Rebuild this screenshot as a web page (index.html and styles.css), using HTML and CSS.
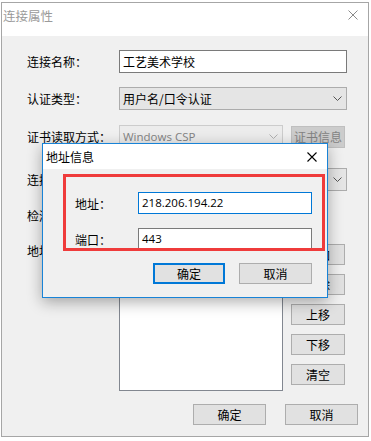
FILE: index.html
```html
<!DOCTYPE html>
<html lang="zh-CN">

<head>
  <meta charset="UTF-8">
  <title>连接属性</title>
  <link rel="stylesheet" href="styles.css">
</head>

<body>
  <div class="desktop">
    <div class="window main-win">
      <div class="titlebar">
        <span class="title">连接属性</span>
        <svg class="close" width="10" height="10" viewBox="0 0 10 10"><path d="M0.5 0.5L9.5 9.5M9.5 0.5L0.5 9.5" /></svg>
      </div>
      <div class="win-body">
        <div class="row r1">
          <label>连接名称：</label>
          <div class="textbox wide">工艺美术学校</div>
        </div>
        <div class="row r2">
          <label>认证类型：</label>
          <div class="combo wide">
            <span>用户名/口令认证</span>
            <svg class="chev" width="9" height="5" viewBox="0 0 9 5"><polyline points="0.5,0.5 4.5,4.5 8.5,0.5" /></svg>
          </div>
        </div>
        <div class="row r3">
          <label>证书读取方式：</label>
          <div class="combo narrow disabled">
            <span class="latin">Windows CSP</span>
            <svg class="chev" width="9" height="5" viewBox="0 0 9 5"><polyline points="0.5,0.5 4.5,4.5 8.5,0.5" /></svg>
          </div>
          <button class="btn side cert-btn disabled">证书信息</button>
        </div>
        <div class="row r4">
          <label>连接方式：</label>
          <div class="combo wide">
            <span>SSL</span>
            <svg class="chev" width="9" height="5" viewBox="0 0 9 5"><polyline points="0.5,0.5 4.5,4.5 8.5,0.5" /></svg>
          </div>
        </div>
        <div class="row r5">
          <label>检测间隔：</label>
          <div class="textbox short">60</div>
        </div>
        <div class="row r6 list-row">
          <label>地址列表：</label>
          <div class="listbox"></div>
          <div class="side-btns">
            <button class="btn side">添加</button>
            <button class="btn side">删除</button>
            <button class="btn side">上移</button>
            <button class="btn side">下移</button>
            <button class="btn side">清空</button>
          </div>
        </div>
        <div class="footer">
          <button class="btn wide-btn">确定</button>
          <button class="btn wide-btn">取消</button>
        </div>
      </div>
    </div>

    <div class="window dialog">
      <div class="titlebar dlg-title">
        <span class="title">地址信息</span>
        <svg class="close" width="10" height="10" viewBox="0 0 10 10"><path d="M0.5 0.5L9.5 9.5M9.5 0.5L0.5 9.5" /></svg>
      </div>
      <div class="dlg-body">
        <div class="dlg-row">
          <label>地址：</label>
          <div class="textbox dlg-input focused latin">218.206.194.22</div>
        </div>
        <div class="dlg-row second">
          <label>端口：</label>
          <div class="textbox dlg-input latin">443</div>
        </div>
        <div class="dlg-buttons">
          <button class="btn default">确定</button>
          <button class="btn">取消</button>
        </div>
      </div>
    </div>

    <div class="highlight"></div>
  </div>
</body>

</html>
```

FILE: styles.css
```css
body {
  margin: 0;
  background: #fff;
  font-family: "Noto Sans CJK SC", sans-serif;
  font-size: 12px;
  color: #000;
}

.desktop {
  position: relative;
  width: 371px;
  height: 441px;
  overflow: hidden;
}

.window {
  box-sizing: border-box;
}

.main-win {
  margin: 2px 0 0 1px;
  width: 368px;
  border: 1px solid #a6a6a6;
  background: #f0f0f0;
}

.titlebar {
  display: flex;
  justify-content: space-between;
  align-items: flex-start;
  height: 33px;
  background: #fff;
}

.main-win .title {
  padding: 4px 0 0 1px;
  line-height: 18px;
  font-size: 12.5px;
  color: #9a9a9a;
}

.main-win .close {
  margin: 7px 10px 0 0;
  stroke: #8a8a8a;
  stroke-width: 1;
  fill: none;
}

.win-body {
  padding: 14px 10px 11px 25px;
}

.row {
  display: flex;
  align-items: center;
  height: 23px;
}

.row label {
  width: 92px;
  flex: none;
}

.r2 { margin-top: 14px; }
.r3 { margin-top: 15px; }
.r4 { margin-top: 20px; }
.r5 { margin-top: 13px; }
.r6 { margin-top: 17px; }

.textbox {
  box-sizing: border-box;
  height: 23px;
  border: 1px solid #7a7a7a;
  background: #fff;
  padding: 0 3px;
  line-height: 21px;
  white-space: nowrap;
}

.wide {
  width: 228px;
}

.short {
  width: 80px;
}

.combo {
  box-sizing: border-box;
  display: flex;
  justify-content: space-between;
  align-items: center;
  height: 23px;
  border: 1px solid #acacac;
  background: #e5e5e5;
  padding: 0 4px 0 3px;
}

.combo .chev {
  fill: none;
  stroke: #555;
  stroke-width: 1;
}

.combo.narrow {
  width: 164px;
}

.combo.disabled {
  background: #ececec;
  border-color: #cccccc;
  color: #838383;
}

.combo.disabled .chev {
  stroke: #b0b0b0;
}

.latin {
  font-family: "Open Sans", "Noto Sans", sans-serif;
  font-size: 11.5px;
}

.btn {
  box-sizing: border-box;
  height: 21px;
  padding: 0;
  border: 1px solid #adadad;
  background: #e1e1e1;
  font-family: inherit;
  font-size: 12px;
  color: #000;
  line-height: 19px;
}

.btn.side {
  width: 54px;
  flex: none;
}

.cert-btn {
  margin-left: 8px;
  height: 22px;
}

.btn.disabled {
  background: #cccccc;
  border-color: #bfbfbf;
  color: #838383;
}

.list-row {
  align-items: flex-start;
  height: auto;
}

.list-row label {
  line-height: 14px;
}

.listbox {
  box-sizing: border-box;
  width: 164px;
  height: 147px;
  border: 1px solid #828790;
  background: #fff;
}

.side-btns {
  display: flex;
  flex-direction: column;
  gap: 9px;
  margin-left: 8px;
}

.footer {
  display: flex;
  justify-content: flex-end;
  gap: 19px;
  margin-top: 13px;
}

.wide-btn {
  width: 73px;
}

/* address dialog floating over the properties window */
.dialog {
  position: absolute;
  left: 42px;
  top: 143px;
  width: 286px;
  border: 1px solid #1883d7;
  background: #f0f0f0;
  box-shadow: 0 4px 14px rgba(0, 0, 0, 0.32);
}

.dlg-title {
  height: 25px;
  align-items: center;
}

.dlg-title .title {
  padding-left: 3px;
  font-size: 12px;
}

.dlg-title .close {
  margin-right: 10px;
  stroke: #000;
  stroke-width: 1.1;
  fill: none;
}

.dlg-body {
  padding: 23px 15px 13px 32px;
}

.dlg-row {
  display: flex;
  align-items: center;
  height: 22px;
}

.dlg-row.second {
  margin-top: 14px;
}

.dlg-row label {
  width: 63px;
  flex: none;
}

.dlg-input {
  width: 174px;
  height: 22px;
  line-height: 20px;
}

.dlg-input.focused {
  border-color: #0078d7;
}

.dlg-buttons {
  display: flex;
  justify-content: flex-end;
  gap: 14px;
  margin-top: 13px;
}

.dlg-buttons .btn {
  width: 73px;
}

.dlg-buttons .btn.default {
  width: 72px;
  border: 2px solid #0078d7;
  line-height: 17px;
}

.highlight {
  position: absolute;
  left: 63px;
  top: 174px;
  width: 262px;
  height: 77px;
  box-sizing: border-box;
  border: 3px solid #ef3b3b;
}
```
